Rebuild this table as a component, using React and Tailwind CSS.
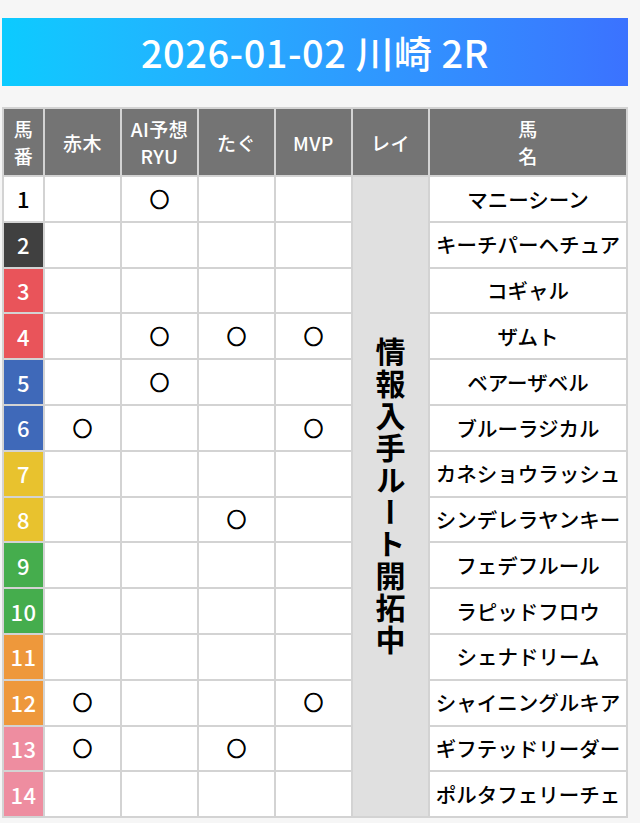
const horses = [
  { no: 1, name: "マニーシーン", frame: "bg-white text-black", marks: [0, 1, 0, 0] },
  { no: 2, name: "キーチパーヘチュア", frame: "bg-[#404040] text-white", marks: [0, 0, 0, 0] },
  { no: 3, name: "コギャル", frame: "bg-[#e9545a] text-white", marks: [0, 0, 0, 0] },
  { no: 4, name: "ザムト", frame: "bg-[#e9545a] text-white", marks: [0, 1, 1, 1] },
  { no: 5, name: "ベアーザベル", frame: "bg-[#3f69b9] text-white", marks: [0, 1, 0, 0] },
  { no: 6, name: "ブルーラジカル", frame: "bg-[#3f69b9] text-white", marks: [1, 0, 0, 1] },
  { no: 7, name: "カネショウラッシュ", frame: "bg-[#e8c22e] text-white", marks: [0, 0, 0, 0] },
  { no: 8, name: "シンデレラヤンキー", frame: "bg-[#e8c22e] text-white", marks: [0, 0, 1, 0] },
  { no: 9, name: "フェデフルール", frame: "bg-[#45ad4d] text-white", marks: [0, 0, 0, 0] },
  { no: 10, name: "ラピッドフロウ", frame: "bg-[#45ad4d] text-white", marks: [0, 0, 0, 0] },
  { no: 11, name: "シェナドリーム", frame: "bg-[#ee983b] text-white", marks: [0, 0, 0, 0] },
  { no: 12, name: "シャイニングルキア", frame: "bg-[#ee983b] text-white", marks: [1, 0, 0, 1] },
  { no: 13, name: "ギフテッドリーダー", frame: "bg-[#ee8da0] text-white", marks: [1, 0, 1, 0] },
  { no: 14, name: "ポルタフェリーチェ", frame: "bg-[#ee8da0] text-white", marks: [0, 0, 0, 0] },
];

const headers = [
  ["馬", "番"],
  ["赤木"],
  ["AI予想", "RYU"],
  ["たぐ"],
  ["MVP"],
  ["レイ"],
  ["馬", "名"],
];

const App = () => {
  return (
    <div
      className="min-h-screen bg-[#f6f6f6] pt-[18px] pl-[2px] pr-[12px]"
      style={{ fontFamily: '"Noto Sans CJK JP", "Noto Sans", sans-serif' }}
    >
      <div className="h-[68px] flex items-center justify-center bg-gradient-to-r from-[#0bcbff] to-[#3b72ff]">
        <h1 className="text-white text-[38px] font-medium leading-none tracking-[0.5px]">
          2026-01-02 川崎 2R
        </h1>
      </div>

      <div className="mt-[21px] grid grid-cols-[39px_75px_75px_75px_75px_75px_196px] grid-rows-[66px_repeat(14,43.8px)] gap-[2px] p-[2px] bg-[#d3d3d3]">
        {headers.map((lines, i) => (
          <div
            key={i}
            className="bg-[#747474] text-white text-[19px] font-medium tracking-[0.5px] leading-[27px] flex flex-col items-center justify-center"
          >
            {lines.map((l) => (
              <span key={l}>{l}</span>
            ))}
          </div>
        ))}

        <div className="col-start-6 row-[2/16] bg-[#e0e0e0] flex items-center justify-center">
          <span className="[writing-mode:vertical-rl] text-[30px] font-bold tracking-[2px] leading-none text-black">
            情報入手ルート開拓中
          </span>
        </div>

        {horses.map((h) => (
          <div key={h.no} className="contents">
            <div className={`${h.frame} flex items-center justify-center text-[22px] font-medium tracking-[0.5px]`}>
              {h.no}
            </div>
            {h.marks.map((m, j) => (
              <div
                key={j}
                className="bg-white flex items-center justify-center text-[19px] text-black [-webkit-text-stroke:1.2px_black]"
              >
                {m ? "○" : ""}
              </div>
            ))}
            <div className="col-start-7 bg-white flex items-center justify-center text-[20.5px] font-medium text-black whitespace-nowrap">
              {h.name}
            </div>
          </div>
        ))}
      </div>
    </div>
  );
};

export default App;
